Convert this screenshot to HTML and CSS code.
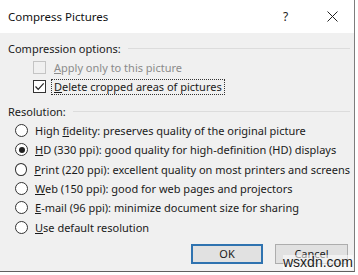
FILE: index.html
```html
<!DOCTYPE html>
<html lang="en">
<head>
    <meta charset="UTF-8">
    <meta name="viewport" content="width=device-width, initial-scale=1.0">
    <title>Compress Pictures</title>
    <link rel="stylesheet" href="styles.css">
</head>
<body>
    <div class="dialog">
        <div class="titlebar">
            <span class="title">Compress Pictures</span>
            <span class="help">?</span>
            <span class="close">
                <svg width="11" height="11" viewBox="0 0 11 11"><path d="M0.5 0.5L10.5 10.5M10.5 0.5L0.5 10.5" stroke="#222" stroke-width="1" fill="none"/></svg>
            </span>
        </div>
        <div class="content">
            <div class="group-head"><span>Compression options:</span><span class="rule"></span></div>
            <div class="check-row disabled">
                <span class="box"></span>
                <span class="label"><u>A</u>pply only to this picture</span>
            </div>
            <div class="check-row">
                <span class="box">
                    <svg width="11" height="11" viewBox="0 0 11 11"><path d="M1.5 5.5L4.2 8.3L9.7 2.3" stroke="#222" stroke-width="1.2" fill="none"/></svg>
                </span>
                <span class="label focus"><u>D</u>elete cropped areas of pictures</span>
            </div>

            <div class="group-head res"><span>Resolution:</span><span class="rule"></span></div>
            <div class="radio-row"><span class="radio"></span><span>High <u>f</u>idelity: preserves quality of the original picture</span></div>
            <div class="radio-row"><span class="radio on"></span><span><u>H</u>D (330 ppi): good quality for high-definition (HD) displays</span></div>
            <div class="radio-row"><span class="radio"></span><span><u>P</u>rint (220 ppi): excellent quality on most printers and screens</span></div>
            <div class="radio-row"><span class="radio"></span><span><u>W</u>eb (150 ppi): good for web pages and projectors</span></div>
            <div class="radio-row"><span class="radio"></span><span><u>E</u>-mail (96 ppi): minimize document size for sharing</span></div>
            <div class="radio-row"><span class="radio"></span><span><u>U</u>se default resolution</span></div>

            <div class="buttons">
                <button class="btn default">OK</button>
                <button class="btn">Cancel</button>
            </div>
        </div>
        <span class="watermark">wsxdn.com</span>
    </div>
</body>
</html>
```

FILE: styles.css
```css
body { margin: 0; background: #fff; font-family: "Noto Sans", "Open Sans", sans-serif; font-size: 11px; color: #1a1a1a; }
.dialog { position: relative; width: 354px; height: 271px; border-right: 1px solid #7d7d7d; border-bottom: 1px solid #5f5f5f; background: #f0f0f0; }
.titlebar { height: 33px; background: #fff; display: flex; align-items: center; padding-left: 8px; }
.title { flex: 1; font-size: 11.5px; color: #111; }
.help { width: 10px; font-size: 12px; margin-right: 34px; color: #222; }
.close { display: flex; margin-right: 16px; }
.content { padding: 6px 4px 0 8px; }
.group-head { display: flex; align-items: center; height: 19px; }
.group-head.res { margin-top: 6px; }
.rule { flex: 1; height: 1px; background: #dcdcdc; margin-left: 7px; }
.check-row { display: flex; align-items: center; height: 19px; padding-left: 25px; }
.box { width: 11px; height: 11px; border: 1px solid #333; background: #fff; margin-right: 5px; display: flex; }
.check-row .label { padding: 0 2px; border: 1px dotted transparent; line-height: 14px; }
.check-row .focus { border-color: #333; }
.disabled .box { border-color: #c4c4c4; background: #f0f0f0; }
.disabled .label { color: #8b8b8b; }
.radio-row { display: flex; align-items: center; height: 19.3px; padding-left: 7px; white-space: nowrap; }
.radio { width: 11px; height: 11px; border: 1px solid #333; border-radius: 50%; background: #fff; margin-right: 7px; display: flex; align-items: center; justify-content: center; }
.radio.on::after { content: ""; width: 6px; height: 6px; border-radius: 50%; background: #222; }
.buttons { display: flex; justify-content: flex-end; gap: 12px; margin-top: 7px; padding-right: 2px; }
.btn { width: 73px; height: 20px; padding: 0; background: #e1e1e1; border: 1px solid #adadad; font-family: inherit; font-size: 11px; color: #1a1a1a; }
.btn.default { width: 72px; border: 2px solid #2f73b0; }
.watermark { position: absolute; left: 283px; top: 255px; font-family: "Liberation Sans", Arial, sans-serif; font-size: 14px; line-height: 15px; color: #1e1e1e; background: rgba(255,255,255,0.55); }
```
